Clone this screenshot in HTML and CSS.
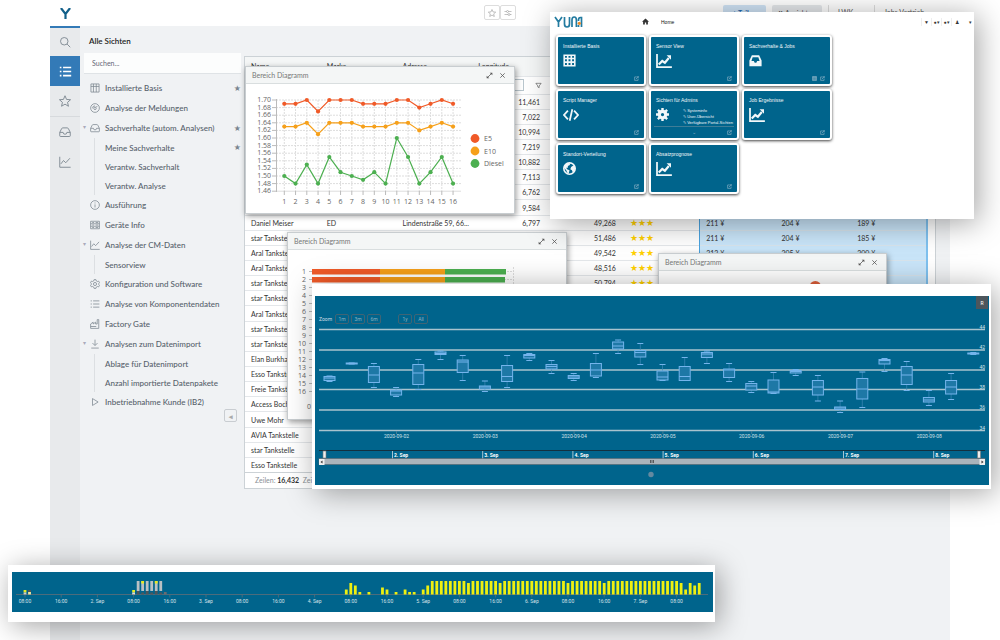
FILE: index.html
```html
<!DOCTYPE html>
<html lang="de">
<head>
<meta charset="utf-8">
<title>YUNA</title>
<link rel="stylesheet" href="styles.css">
</head>
<body>
<svg class="defs" aria-hidden="true">
  <symbol id="i-search" viewBox="0 0 16 16"><circle cx="7" cy="7" r="5"/><path d="M10.8 10.8L15 15"/></symbol>
  <symbol id="i-list" viewBox="0 0 16 16"><path d="M1 3h2M1 8h2M1 13h2M5 3h10M5 8h10M5 13h10"/></symbol>
  <symbol id="i-star" viewBox="0 0 16 16"><path d="M8 1l2.1 4.9 5.3.4-4 3.5 1.2 5.2L8 12.2 3.400 15l1.200-5.200-4-3.500 5.300-.4z"/></symbol>
  <symbol id="i-inbox" viewBox="0 0 16 16"><path d="M1 8.500L3.500 3.500Q4 2.500 5 2.500h6q1 0 1.500 1L15 8.500V13q0 1-1 1H2q-1 0-1-1zM1 8.500h4.500q0 2.500 2.500 2.500t2.500-2.500H15"/></symbol>
  <symbol id="i-chart" viewBox="0 0 16 16"><path d="M1 1v14h14.500M2.500 10.500L6 6l3 3 5.500-6"/></symbol>
  <symbol id="i-table" viewBox="0 0 16 16"><path d="M1.500 1.500h13v13h-13zM5.500 1.500v13M10 1.500v13M1.500 5.500h13"/></symbol>
  <symbol id="i-gauge" viewBox="0 0 16 16"><circle cx="8" cy="8" r="7"/><circle cx="8" cy="8.500" r="2"/><path d="M9.500 7L12 4.500M4 8.500A4 4 0 0 1 8 4.500"/></symbol>
  <symbol id="i-info" viewBox="0 0 16 16"><circle cx="8" cy="8" r="7"/><path d="M8 7v5M8 4v1.500"/></symbol>
  <symbol id="i-device" viewBox="0 0 16 16"><path d="M1 2h14v12H1zM1 6h14M1 10h14M3.500 4h3M9 4h4M3.500 8h3M9 8h4M3.500 12h3M9 12h4"/></symbol>
  <symbol id="i-gear" viewBox="0 0 16 16"><circle cx="8" cy="8" r="2.500"/><path d="M6.500 1h3l.5 2 1.800 1 2-.6 1.500 2.600L13.800 7.500v1l1.500 1.500-1.500 2.600-2-.6-1.800 1-.5 2h-3l-.5-2-1.800-1-2 .6L.7 10l1.500-1.500v-1L.7 6l1.500-2.600 2 .6L6 3z"/></symbol>
  <symbol id="i-factory" viewBox="0 0 16 16"><path d="M1 15V8l4-3v3l4-3v3h2.500V1H14v14zM1 12h9"/></symbol>
  <symbol id="i-down" viewBox="0 0 16 16"><path d="M8 1v9M4 6.500L8 10.500l4-4M2 14.500h12"/></symbol>
  <symbol id="i-play" viewBox="0 0 16 16"><path d="M4 2.500L13 8l-9 5.500z"/></symbol>
  <symbol id="i-sliders" viewBox="0 0 16 16"><path d="M1 5h4M9 5h6M1 11h7M12 11h3"/><circle cx="7" cy="5" r="2"/><circle cx="10" cy="11" r="2"/></symbol>
  <symbol id="i-grow" viewBox="0 0 16 16"><path d="M3 13L13 3"/><path d="M8.500 1.500h6v6zM1.500 8.500v6h6z" fill="currentColor" stroke="none"/></symbol>
  <symbol id="i-close" viewBox="0 0 16 16"><path d="M3 3l10 10M13 3L3 13"/></symbol>
  <symbol id="i-filter" viewBox="0 0 16 16"><path d="M2 3h12L9.500 9v4l-3-1.500V9z"/></symbol>
  <symbol id="t-table" viewBox="0 0 16 16"><path d="M1.500 1.500h13v13h-13zM5.800 1.500v13M10.200 1.500v13M1.500 5.500h13M1.500 10h13"/></symbol>
  <symbol id="t-chart" viewBox="0 0 18 16"><path d="M1 0v15h17"/><path d="M3 12l4-4 3 2 4.500-5.500" stroke-width="2.500"/><path d="M12 1.500h5v5z" fill="currentColor" stroke="none"/></symbol>
  <symbol id="t-inbox" viewBox="0 0 16 16"><path d="M3.500 1.500h9L15.500 8v7H.5V8zM4.500 4L3 8.500h3l1 2.200h2l1-2.200h3L11.500 4z" fill="currentColor" fill-rule="evenodd" stroke="none"/></symbol>
  <symbol id="t-code" viewBox="0 0 18 16"><path d="M5.500 3L1 8l4.500 5M12.500 3L17 8l-4.500 5M10.500 1.500l-3 13"/></symbol>
  <symbol id="t-gear" viewBox="0 0 16 16"><circle cx="8" cy="8" r="4" stroke-width="4"/><path d="M8 0v3M8 13v3M0 8h3M13 8h3M2.300 2.300l2 2M11.700 11.700l2 2M2.300 13.700l2-2M11.700 4.300l2-2" stroke-width="3"/></symbol>
  <symbol id="t-globe" viewBox="0 0 16 16"><circle cx="8" cy="8" r="7"/><path d="M2 4l4-3 3 1-1 2-2 1 0 2-2 0 1 2 3 1-1 4-2-1-1-3-3-3zM10 6l3-2 2 3-1 4-2 2-1-3-2-1z" fill="currentColor" stroke="none"/></symbol>
  <symbol id="t-edit" viewBox="0 0 16 16"><path d="M9 3H2v11h11V8M6 10l8-8M10 2h4v4"/></symbol>
  <symbol id="t-home" viewBox="0 0 16 16"><path d="M8 1l8 7.500h-2.500V15H9.500v-4.500h-3V15H2.500V8.500H0z" fill="currentColor" stroke="none"/></symbol>
</svg>

<div class="stage">
  <div class="app">
    <header class="topbar">
      <svg class="mark" viewBox="0 0 12 12"><path d="M1 0l5 6.500L11 0M6 6v6"/></svg>
      <div class="tools">
        <button aria-label="Favorit"><svg class="icon"><use href="#i-star"/></svg></button>
        <button aria-label="Einstellungen"><svg class="icon"><use href="#i-sliders"/></svg></button>
      </div>
      <div class="actions">
        <button class="share">+ Teilen</button>
        <button class="open">⠿ Ansichten</button>
        <span class="facet">LWK</span><span class="facet wide">Jobs Vertrieb</span>
      </div>
    </header>
    <div class="body">
      <nav class="rail" aria-label="Bereiche">
        <button aria-label="Suche"><svg class="icon"><use href="#i-search"/></svg></button>
        <button class="on" aria-label="Sichten"><svg class="icon"><use href="#i-list"/></svg></button>
        <button aria-label="Favoriten"><svg class="icon"><use href="#i-star"/></svg></button>
        <button class="split" aria-label="Eingang"><svg class="icon"><use href="#i-inbox"/></svg></button>
        <button aria-label="Analyse"><svg class="icon"><use href="#i-chart"/></svg></button>
      </nav>
      <aside class="side">
        <h1>Alle Sichten</h1>
        <input class="find" type="search" placeholder="Suchen..." aria-label="Suchen">
        <ul class="tree">
          <li><a href="#"><svg class="icon"><use href="#i-table"/></svg>Installierte Basis<i>★</i></a></li>
          <li><a href="#"><svg class="icon"><use href="#i-gauge"/></svg>Analyse der Meldungen</a></li>
          <li class="open"><a href="#"><svg class="icon"><use href="#i-inbox"/></svg>Sachverhalte (autom. Analysen)<i>★</i></a>
            <ul><li><a href="#">Meine Sachverhalte<i>★</i></a></li><li><a href="#">Verantw. Sachverhalt</a></li><li><a href="#">Verantw. Analyse</a></li></ul></li>
          <li><a href="#"><svg class="icon"><use href="#i-info"/></svg>Ausführung</a></li>
          <li><a href="#"><svg class="icon"><use href="#i-device"/></svg>Geräte Info</a></li>
          <li class="open"><a href="#"><svg class="icon"><use href="#i-chart"/></svg>Analyse der CM-Daten</a>
            <ul><li><a href="#">Sensorview</a></li></ul></li>
          <li><a href="#"><svg class="icon"><use href="#i-gear"/></svg>Konfiguration und Software</a></li>
          <li><a href="#"><svg class="icon"><use href="#i-list"/></svg>Analyse von Komponentendaten</a></li>
          <li><a href="#"><svg class="icon"><use href="#i-factory"/></svg>Factory Gate</a></li>
          <li class="open"><a href="#"><svg class="icon"><use href="#i-down"/></svg>Analysen zum Datenimport</a>
            <ul><li><a href="#">Ablage für Datenimport</a></li><li><a href="#">Anzahl importierte Datenpakete</a></li></ul></li>
          <li><a href="#"><svg class="icon"><use href="#i-play"/></svg>Inbetriebnahme Kunde (IB2)</a></li>
        </ul>
        <button class="fold" aria-label="Einklappen">◂</button>
      </aside>
      <main class="content">
        <div class="grid">
          <table>
            <thead>
              <tr><th>Name</th><th>Marke</th><th>Adresse</th><th>Longitude</th><th></th><th></th><th></th><th></th><th></th></tr>
              <tr class="filters"><td></td><td></td><td></td><td><div class="filter"><input aria-label="Longitude filtern"><svg class="icon"><use href="#i-filter"/></svg></div></td><td></td><td></td><td></td><td></td><td></td></tr>
            </thead>
            <tbody id="rows"></tbody>
          </table>
          <footer>Zeilen: <b>16,432</b>&nbsp; Zeilen gesamt</footer>
        </div>
      </main>
    </div>
  </div>

  <section class="dialog d-pie">
    <header>Bereich Diagramm<span><button aria-label="Vergrößern"><svg class="icon"><use href="#i-grow"/></svg></button><button aria-label="Schließen"><svg class="icon"><use href="#i-close"/></svg></button></span></header>
    <svg class="plot" viewBox="659 271 228 60"><circle cx="816" cy="287" r="6" fill="#e0603a"/></svg>
  </section>
  <section class="dialog d-bars">
    <header>Bereich Diagramm<span><button aria-label="Vergrößern"><svg class="icon"><use href="#i-grow"/></svg></button><button aria-label="Schließen"><svg class="icon"><use href="#i-close"/></svg></button></span></header>
    <svg class="plot" id="bars" viewBox="288 250 278 169"></svg>
  </section>
  <section class="dialog d-line">
    <header>Bereich Diagramm<span><button aria-label="Vergrößern"><svg class="icon"><use href="#i-grow"/></svg></button><button aria-label="Schließen"><svg class="icon"><use href="#i-close"/></svg></button></span></header>
    <svg class="plot" id="line" viewBox="246 84 268 129"></svg>
  </section>

  <section class="window portal">
    <header>
      <svg class="logo" viewBox="0 0 29 12" aria-label="YUNA"><path d="M1 1l3.500 5L8 1M4.500 6v5M10.500 1v7q0 3 2.500 3t2.500-3V1M18 11V4q0-3 2.200-3t2.200 3v7M27.500 11V1.500h-1q-2 0-2 2.500v1M24.500 9v2"/><circle cx="25.300" cy="7.300" r="1.600"/></svg>
      <svg class="icon home"><use href="#t-home"/></svg><span class="here">Home</span>
      <span class="user"><span>▼</span><span>●▾</span><span>●▾</span><span>♟</span><span>▾</span></span>
    </header>
    <div class="tiles">
      <a class="tile" href="#"><b>Installierte Basis</b><svg class="icon"><use href="#t-table"/></svg><em><svg class="icon"><use href="#t-edit"/></svg></em></a>
      <a class="tile" href="#"><b>Sensor View</b><svg class="icon wide"><use href="#t-chart"/></svg><em><svg class="icon"><use href="#t-edit"/></svg></em></a>
      <a class="tile" href="#"><b>Sachverhalte &amp; Jobs</b><svg class="icon"><use href="#t-inbox"/></svg><em><svg class="icon"><use href="#t-table"/></svg><svg class="icon"><use href="#t-edit"/></svg></em></a>
      <a class="tile" href="#"><b>Script Manager</b><svg class="icon wide"><use href="#t-code"/></svg><em><svg class="icon"><use href="#t-edit"/></svg></em></a>
      <a class="tile admin" href="#"><b>Sichten für Admins</b><span class="row"><svg class="icon"><use href="#t-gear"/></svg><span class="links"><span>Systeminfo</span><span>User-Übersicht</span><span>Verfügbare Portal-Sichten</span></span></span><em><span>⌄</span><svg class="icon"><use href="#t-edit"/></svg></em></a>
      <a class="tile" href="#"><b>Job Ergebnisse</b><svg class="icon wide"><use href="#t-chart"/></svg><em><svg class="icon"><use href="#t-edit"/></svg></em></a>
      <a class="tile" href="#"><b>Standort-Verteilung</b><svg class="icon"><use href="#t-globe"/></svg><em><svg class="icon"><use href="#t-edit"/></svg></em></a>
      <a class="tile" href="#"><b>Absatzprognose</b><svg class="icon wide"><use href="#t-chart"/></svg><em><svg class="icon"><use href="#t-edit"/></svg></em></a>
    </div>
  </section>

  <section class="window boxes">
    <div class="panel">
      <div class="range"><span>Zoom</span><button>1m</button><button>3m</button><button>6m</button><button class="year">1y</button><button>All</button><button class="reset">R</button></div>
      <svg class="plot" id="box" viewBox="315 325 674 160"></svg>
    </div>
  </section>

  <section class="window events">
    <div class="panel"><svg class="plot" id="events" viewBox="12 572 701 40"></svg></div>
  </section>
</div>
<script src="app.js"></script>
</body>
</html>
```
FILE: styles.css
```css
* { box-sizing: border-box; }
body { margin: 0; background: #fff; font: 7px/10px Lato, "Noto Sans", sans-serif; color: #333; }
button { border: 0; padding: 0; background: none; font: inherit; color: inherit; display: flex; align-items: center; justify-content: center; }
a { color: inherit; text-decoration: none; }
ul { list-style: none; margin: 0; padding: 0; }
.defs { position: absolute; width: 0; height: 0; }
.icon { width: 10px; height: 10px; fill: none; stroke: currentColor; stroke-width: 1.2; flex: none; display: block; }
.plot { display: block; width: 100%; height: auto; }

.stage { position: relative; min-height: 640px; overflow: hidden; }
.app { margin: 0 5%; min-height: 640px; display: flex; flex-direction: column; }
.topbar { height: 26px; padding: 0 10px; display: flex; align-items: flex-start; }
.mark { width: 11px; height: 11px; margin-top: 8px; fill: none; stroke: #12608a; stroke-width: 2.4; }
.tools { display: flex; margin: 5px 0 0 413px; color: #999; }
.tools button { width: 16px; height: 15px; border: 1px solid #ddd; border-radius: 2px; }
.tools .icon { width: 8px; height: 8px; }
.actions { display: flex; margin: 5px 0 0 auto; gap: 6px; line-height: 15px; color: #555; }
.actions button { height: 16px; width: 43px; border-radius: 2px; background: #e4e7ea; }
.actions .open { width: 50px; }
.actions .share { background: #cfe3f5; color: #1a66ac; font-weight: 700; }
.facet { width: 40px; border-left: 1px solid #ddd; padding-left: 9px; }
.facet.wide { width: 66px; }

.body { flex: 1; display: flex; background: #f0f2f4; }
.rail { width: 30px; background: #e8eaec; color: #7b868f; border-top: 2px solid #337ab7; }
.rail button { width: 100%; height: 30px; }
.rail button:first-child { height: 28px; }
.rail .icon { width: 12px; height: 12px; }
.rail .on { background: #337ab7; color: #fff; }
.rail .on .icon { width: 13px; height: 13px; stroke-width: 2; }
.rail .split { border-top: 1px solid #d7dadd; height: 31px; }
.side { width: 161px; padding: 9px 0 0 4px; font-weight: 700; color: #66717b; }
.side h1 { margin: 0; padding-left: 5px; font-size: 8px; line-height: 12px; font-weight: 600; color: #222; }
.find { display: block; width: 100%; height: 21px; margin: 6px 0 4px; padding: 0 8px; border: 0; border-bottom: 1px solid #dfe3e6; background: #fcfdfd; font: 7px Lato, sans-serif; }
.find::placeholder { color: #667; }
.tree { font-size: 8px; font-weight: 500; color: #56616b; }
.tree .icon { color: #7b868f; }
.tree a { display: flex; align-items: center; gap: 5px; height: 20px; padding: 0 0 0 6px; white-space: nowrap; }
.tree i { margin-left: auto; font: 8px "DejaVu Sans", sans-serif; color: #7b868f; }
.tree ul { margin-left: 10px; border-left: 1px solid #dcdfe2; }
.tree ul a { height: 19px; padding-left: 10px; }
li.open { position: relative; }
li.open::before { content: "▾"; position: absolute; left: -1px; top: 4px; font-size: 6px; color: #aab; }
.fold { width: 13px; height: 13px; margin: -3px 4px 0 auto; border: 1px solid #c9cdd1; border-radius: 2px; color: #aaa; }

.content { flex: 1; min-width: 0; padding: 30px 14px 0 0; }
.grid { margin-left: 3px; border: 1px solid #ccd2d6; background: #fff; }
.grid table { width: 99%; height: 415px; border-collapse: collapse; table-layout: fixed; color: #333; }
.grid th { height: 19px; padding: 0 6px; text-align: left; background: #f4f6f6; font-weight: 400; }
.grid td { padding: 0 6px; border-top: 1px solid #e4e7ea; white-space: nowrap; overflow: hidden; }
.grid .filters td { height: 18px; }
.filter { display: flex; align-items: center; justify-content: space-between; }
.filter input { width: 46px; height: 12px; border: 1px solid #b9c6cd; padding: 0; }
.filter .icon { width: 7px; height: 7px; }
.grid .num { text-align: right; padding-right: 8px; }
.grid .stars { color: #ffd000; font: 9px/10px "DejaVu Sans", sans-serif; }
.grid .price { background: #c9e5f9; border-top-color: #d8e4ec; }
.grid .price.first { border-left: 1px solid #4aa3df; }
.grid .price.last { border-right: 2px solid #7fc1ef; }
.grid footer { padding: 2px 10px 3px; border-top: 1px solid #ccd2d6; color: #8a9096; }
.grid footer b { color: #333; }

.dialog { position: absolute; background: #fff; border: 1px solid #c8cdd0; box-shadow: 1px 2px 6px rgba(0,0,0,.4); }
.dialog header { display: flex; justify-content: space-between; align-items: center; height: 17px; padding: 0 8px 0 6px; background: #f4f6f6; border-bottom: 1px solid #d9dedf; color: #777; }
.dialog header span { display: flex; gap: 6px; color: #555; }
.dialog header .icon { width: 7px; height: 7px; stroke-width: 1.8; }
.d-line { left: 24.5%; top: 66px; width: 27%; }
.d-bars { left: 28.7%; top: 232px; width: 28%; }
.d-pie { left: 65.8%; top: 253px; width: 22.9%; }
.plot text { font: 7px "Open Sans", sans-serif; fill: #666; }

.window { position: absolute; background: #fff; box-shadow: 4px 4px 28px rgba(0,0,0,.36); }
.portal { left: 55%; top: 12px; width: 42.4%; height: 207px; font: 5px/8px "Liberation Sans", sans-serif; }
.portal header { display: flex; align-items: center; height: 19px; padding-left: 4px; }
.logo { width: 29px; height: 12px; fill: none; stroke: #237ba0; stroke-width: 1.7; }
.logo circle { fill: #f28a22; stroke: none; }
.home { width: 7px; height: 7px; margin-left: 59px; }
.here { margin-left: 9px; padding-left: 3px; color: #111; }
.user { display: flex; margin-left: auto; }
.user span { width: 10px; text-align: center; border-left: 1px solid #eee; }
.user span:last-child { width: 13px; text-align: right; border: 0; padding-right: 2px; }
.tiles { display: grid; grid-template-columns: repeat(3, 90px); grid-auto-rows: 51px; gap: 3px; padding: 4px 6px; }
.tile { display: flex; flex-direction: column; position: relative; padding: 5px; border: 2px solid #fff; border-radius: 3px; background: #00648c; color: #f2f7f9; box-shadow: 0 1px 3px rgba(0,0,0,.75); }
.tile b { font-weight: 400; margin-bottom: 4px; }
.tile .icon { width: 13px; height: 13px; stroke-width: 2; }
.tile .wide { width: 16px; height: 14px; }
.tile em { position: absolute; right: 5px; bottom: 3px; display: flex; gap: 3px; color: #8fb6c8; }
.tile em .icon { width: 5px; height: 5px; }
.tile.admin em { left: 3px; right: 3px; bottom: 1px; padding: 1px 2px 1px 38px; justify-content: space-between; align-items: center; border-top: 1px solid #3f7d97; }
.row { display: flex; gap: 14px; }
.links { display: grid; line-height: 6px; font-size: 4px; white-space: nowrap; }
.links span::before { content: "✎ "; }

.panel { background: #00648c; overflow: hidden; }
.boxes { left: 31.2%; top: 284px; width: 67.9%; padding: 12px 2px 4px 3px; }
.boxes .range { height: 29px; display: flex; align-items: flex-end; gap: 2px; padding: 0 4px 1px; position: relative; font: 5px/10px Roboto, sans-serif; color: #cfdde4; }
.range button { width: 14px; height: 10px; border: 1px solid #3f6475; border-radius: 2px; color: #8fb0bf; }
.range .year { margin-left: 15px; }
.range span { width: 14px; }
.range .reset { position: absolute; right: 1px; top: 0; width: 12px; height: 13px; background: #4d565c; border: 0; border-radius: 0; color: #fff; }
.boxes text, .events text { font: 5px Roboto, sans-serif; fill: #d5e2e8; }
.events { left: .8%; top: 565px; width: 70.7%; padding: 7px 2px 10px 4px; }
```
FILE: app.js
```js
const NS = 'http://www.w3.org/2000/svg';
function add(parent, tag, attrs, text) {
  const el = document.createElementNS(NS, tag);
  for (const k in attrs) el.setAttribute(k, attrs[k]);
  if (text !== undefined) el.textContent = text;
  parent.appendChild(el);
  return el;
}
function seg(p, x1, y1, x2, y2, stroke, w = 1, dash) {
  const a = { x1, y1, x2, y2, stroke, 'stroke-width': w };
  if (dash) a['stroke-dasharray'] = dash;
  add(p, 'line', a);
}
function rect(p, x, y, width, height, fill, extra) {
  add(p, 'rect', Object.assign({ x, y, width, height, fill }, extra));
}

// Grid rows
const lon = ['11,461', '7,022', '10,994', '7,219', '10,882', '7,113', '6,762', '9,584', '6,797'];
const names = ['Daniel Meiser', 'star Tankstelle', 'Aral Tankstelle', 'Aral Tankstelle', 'star Tankstelle', 'star Tankstelle', 'Aral Tankstelle', 'star Tankstelle', 'star Tankstelle', 'Elan Burkhardt', 'Esso Tankstelle', 'Freie Tankstelle', 'Access Bochum', 'Uwe Mohr', 'AVIA Tankstelle', 'star Tankstelle', 'Esso Tankstelle'];
const km = ['49,268', '51,486', '49,542', '48,516', '50,794'];
const prices = [['211 ¥', '204 ¥', '189 ¥'], ['211 ¥', '204 ¥', '185 ¥'], ['212 ¥', '205 ¥', '200 ¥']];
const rows = document.getElementById('rows');
for (let i = 0; i < 25; i++) {
  const r = i - 8;
  const p = prices[r] || ['', '', ''];
  const tr = rows.insertRow();
  [[names[r], ''], [r === 0 ? 'ED' : '', ''], [r === 0 ? 'Lindenstraße 59, 66...' : '', ''], [lon[i], 'num'], [km[r], 'num'],
    [km[r] ? '★★★' : '', 'stars'], [p[0], 'price first'], [p[1], 'price'], [p[2], 'price last']].forEach(([t, c]) => {
    const td = tr.insertCell();
    td.textContent = t || '';
    td.className = c;
  });
}

// Line chart
const line = document.getElementById('line');
const vy = v => 100 + (170 - v) * 3.8;
const vx = i => 284.3 + i * 11.25;
for (let v = 170; v >= 146; v -= 2) {
  seg(line, 272, vy(v), 276, vy(v), '#bbb');
  seg(line, 276, vy(v), 461, vy(v), '#ddd', 1, v === 146 ? '' : '2 1');
  add(line, 'text', { x: 271, y: vy(v) + 2, 'text-anchor': 'end' }, (v / 100).toFixed(2));
}
seg(line, 276.5, 99, 276.5, 192, '#bbb');
for (let i = 0; i < 16; i++) {
  seg(line, vx(i), 100, vx(i), 191, '#ddd', 1, '2 1');
  seg(line, vx(i), 191, vx(i), 195, '#bbb');
  add(line, 'text', { x: vx(i), y: 204, 'text-anchor': 'middle' }, i + 1);
}
[['E5', '#f05a28', [169, 169, 170, 167, 170, 170, 170, 169, 169, 169, 170, 170, 168, 169, 170, 169]],
  ['E10', '#f6a01a', [163, 163, 164, 161, 164, 164, 164, 163, 163, 163, 164, 164, 162, 163, 164, 163]],
  ['Diesel', '#4caf50', [150, 148, 153, 148, 155, 151, 150, 149, 151, 148, 160, 155, 148, 151, 155, 148]]
].forEach(([name, color, data], s) => {
  add(line, 'polyline', { points: data.map((v, i) => vx(i) + ',' + vy(v)).join(' '), fill: 'none', stroke: color, 'stroke-width': 1.2 });
  data.forEach((v, i) => add(line, 'circle', { cx: vx(i), cy: vy(v), r: 2.1, fill: color }));
  add(line, 'circle', { cx: 475, cy: 138.5 + s * 12.5, r: 4.4, fill: color });
  add(line, 'text', { x: 484, y: 141 + s * 12.5 }, name);
});

// Stacked bars
const bars = document.getElementById('bars');
for (let i = 0; i < 16; i++) {
  const y = 271.5 + i * 8;
  add(bars, 'text', { x: 306, y: y + 2.5, 'text-anchor': 'end' }, i + 1);
  seg(bars, 309, y, 312, y, '#bbb');
  seg(bars, 312, y, 513, y, '#ddd', 1, '2 1');
  rect(bars, 312, y - 2.5, 68, 5.5, '#f05a28');
  rect(bars, 380, y - 2.5, 65, 5.5, '#f6a01a');
  rect(bars, 445, y - 2.5, i % 2 ? 60 : 61, 5.5, '#4caf50');
}
seg(bars, 513.5, 267, 513.5, 396, '#ddd', 1, '2 1');
add(bars, 'text', { x: 307, y: 409 }, '0');

// Box plot: upper whisker, upper quartile, median, lower quartile, lower whisker
const box = document.getElementById('box');
[329.5, 350, 370, 389.5, 410, 430.5].forEach((y, i) => {
  seg(box, 319, y, 985, y, '#a9c3ce', 1.3);
  add(box, 'text', { x: 985, y: y - 1, 'text-anchor': 'end' }, 44 - i * 2);
});
[[376, 376.5, 378, 380.5, 381.5], [363, 363, 363.5, 364, 364], [363.5, 366.5, 375, 382.5, 387.5], [387.5, 390, 391, 395, 396.5],
  [359.5, 364.5, 373, 384.5, 389.5], [351, 352, 353.5, 354.5, 359.5], [355.5, 360, 362, 372.5, 380.5], [381, 386, 387, 389, 391.5],
  [355.5, 365.5, 376.5, 381.5, 387.5], [353.5, 354.5, 355.5, 358, 360.5], [360.5, 364.5, 366.5, 369, 373.5], [373.5, 375.5, 377, 378.5, 380.5],
  [353.5, 363.5, 370, 376, 377.5], [340, 342, 346, 349, 353.5], [343.5, 350.5, 352.5, 357, 364.5], [364.5, 371, 377, 380, 380.5],
  [357.5, 366.5, 376.5, 380.5, 380.5], [351, 352.5, 354, 357.5, 363.5], [363.5, 369, 370, 377.5, 381.5], [381.5, 383.5, 386, 390, 392.5],
  [372.5, 380, 392, 393, 393.5], [369.5, 370.5, 371.5, 373, 375.5], [375.5, 380.5, 387, 395, 401], [401, 407, 408, 409.5, 412.5],
  [372, 378.5, 389, 399, 407.5], [358.5, 359.5, 360.5, 364, 371.5], [361.5, 366.5, 375, 384.5, 390.5], [390.5, 397.5, 400, 402, 405.5],
  [373.5, 380.5, 387, 394, 399.5], [352.5, 353, 353.5, 354, 354.5]
].forEach(([a, b, m, c, d], i) => {
  const x = 329.5 + i * 22.2, blue = '#74b4ec';
  seg(box, x, a, x, b, '#3f88b8', 0.7);
  seg(box, x, c, x, d, '#3f88b8', 0.7);
  seg(box, x - 3, a, x + 3, a, blue);
  seg(box, x - 3, d, x + 3, d, blue);
  rect(box, x - 5.5, b, 11, Math.max(c - b, 0.5), '#1e78a6', { stroke: blue });
  seg(box, x - 5.5, m, x + 5.5, m, blue);
});
for (let i = 0; i < 7; i++) {
  seg(box, 396.5 + i * 88.8, 431, 396.5 + i * 88.8, 434, '#5d8496', 0.7);
  add(box, 'text', { x: 396.5 + i * 88.8, y: 438, 'text-anchor': 'middle' }, '2020-09-0' + (i + 2));
  seg(box, 392.5 + i * 90.2, 451, 392.5 + i * 90.2, 459, '#cfdde4', 0.8);
  add(box, 'text', { x: 394 + i * 90.2, y: 456.5, style: 'font-weight:700;fill:#fff' }, (i + 2) + '. Sep');
}
seg(box, 319, 450.5, 985, 450.5, '#12303f');
rect(box, 319, 458.5, 666, 6, '#abb4bb', { stroke: '#59656d', 'stroke-width': 0.6 });
[319, 979.5].forEach((x, i) => {
  rect(box, x, 459, 5.5, 6, '#eee');
  add(box, 'path', { d: i ? 'M981.5 460.5v3l2-1.5z' : 'M322.5 460.5v3l-2-1.5z', fill: '#333' });
});
[323, 977.5].forEach(x => rect(box, x, 451, 3, 7, '#eee', { stroke: '#777', 'stroke-width': 0.6 }));
[650.5, 652, 653.5].forEach(x => seg(box, x, 460, x, 463, '#333', 0.7));
add(box, 'circle', { cx: 651, cy: 474.5, r: 2.7, fill: '#6489a0' });

// Event histogram, one bar per hour
const ev = document.getElementById('events');
const base = 594.5, hour = 4.525;
seg(ev, 16, base, 708, base, '#5f6f78', 0.8);
const put = (i, top, bottom, color) => rect(ev, 25 + i * hour - 1.4, top, 2.8, bottom - top, color);
put(0, 590, 592.5, '#e8ec20'); put(0, 592.5, base, '#ccc');
put(1, 590, 592, '#555'); put(1, 592, base, '#eee9a0');
put(24, 590, 592.5, '#e8ec20'); put(24, 592.5, base, '#ddd');
for (let i = 25; i < 31; i++) {
  put(i, 581, 591, '#b9c0c4');
  put(i, i % 2 ? 591 : 592.5, base, '#4f555a');
  if (i === 26 || i === 29) put(i, 581, 583.5, '#e8ec20');
}
put(31, 592, base, '#6b6b70');
const heights = { 71: 5, 72: 11.5, 73: 9, 74: 2.5, 76: 2.5, 79: 7, 80: 5, 82: 2.5, 84: 5, 85: 2.5, 86: 2.5, 88: 5, 89: 9 };
for (let i = 90; i < 145; i++) heights[i] = [98, 105, 120, 128].includes(i) ? 11.5 : 13.5;
Object.assign(heights, { 145: 11.5, 146: 5, 147: 11.5, 148: 9, 149: 11.5 });
for (const i in heights) put(+i, base - heights[i], base, '#eef010');
['08:00', '16:00', '2. Sep', '08:00', '16:00', '3. Sep', '08:00', '16:00', '4. Sep', '08:00', '16:00', '5. Sep', '08:00', '16:00', '6. Sep', '08:00', '16:00', '7. Sep', '08:00'].forEach((t, i) => {
  const x = 25 + i * hour * 8;
  seg(ev, x, base, x, base + 3, '#5f6f78', 0.7);
  add(ev, 'text', { x, y: 603, 'text-anchor': 'middle' }, t);
});
```
